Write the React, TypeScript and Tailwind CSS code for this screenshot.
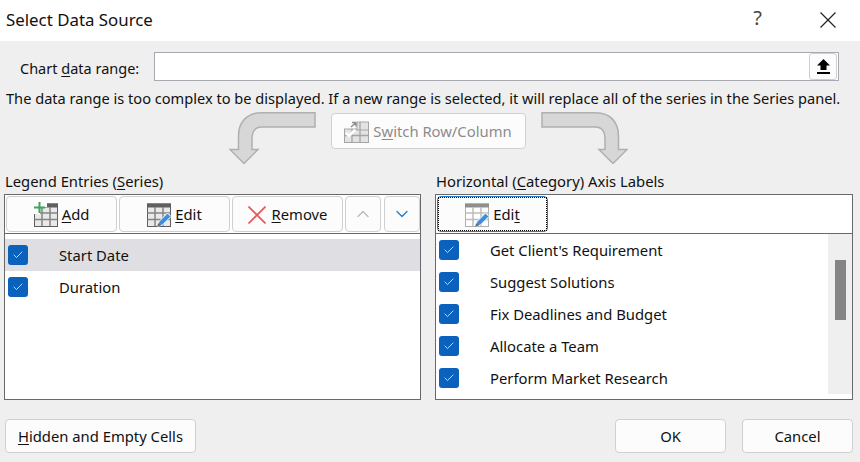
import type { ReactNode } from "react";
import { ChevronUp, ChevronDown, Check } from "lucide-react";

const font = "font-['Noto_Sans','Open_Sans',sans-serif]";

function Key({ children }: { children: ReactNode }) {
  return <span className="underline underline-offset-2 decoration-1">{children}</span>;
}

function Cross({ size, color, width }: { size: number; color: string; width: number }) {
  return (
    <svg width={size} height={size} viewBox={`0 0 ${size} ${size}`} className="shrink-0">
      <path d={`M0.5 0.5L${size - 0.5} ${size - 0.5}M${size - 0.5} 0.5L0.5 ${size - 0.5}`} stroke={color} strokeWidth={width} />
    </svg>
  );
}

function GridIcon({ dim }: { dim?: boolean }) {
  const line = dim ? "#b0b0b0" : "#5f5f5f";
  return (
    <svg width="24" height="24" viewBox="0 0 24 24" className="shrink-0">
      <rect x="0.5" y="1" width="23" height="22.5" fill={dim ? "#fff" : "#e9e9e9"} stroke={line} />
      <rect x="0" y="0.5" width="24" height="4" fill={dim ? "#8f8f8f" : line} />
      <path d="M0.5 10H23.5M0.5 16.5H23.5M8 4V23M16 4V23" stroke={dim ? "#bdbdbd" : "#858585"} strokeWidth="1.5" />
    </svg>
  );
}

function AddIcon() {
  return (
    <span className="relative block h-6 w-[24px] shrink-0">
      <GridIcon />
      <svg width="13" height="12" viewBox="0 0 13 12" className="absolute -top-[1px] left-0">
        <path d="M0 0H13V5H6V12H0Z" fill="#fff" />
        <path d="M5.5 0V11M0 5.5H11" stroke="#3fa35b" strokeWidth="2" />
      </svg>
    </span>
  );
}

function EditIcon({ dim }: { dim?: boolean }) {
  return (
    <span className="relative block h-6 w-[24px] shrink-0">
      <GridIcon dim={dim} />
      <svg width="16" height="17" viewBox="0 0 16 17" className="absolute -right-[1px] -bottom-[1px]">
        <path d="M1.5 15.5L3 10.5L11.5 2L15 5.5L6.5 14Z" fill="#3c8fdc" stroke="#fff" strokeWidth="1" />
        <path d="M1 16L2.2 12L5 14.8Z" fill="#6f6f6f" />
      </svg>
    </span>
  );
}

function Btn({ className, children }: { className: string; children: ReactNode }) {
  return (
    <button className={`flex shrink-0 items-center justify-center rounded-[4px] border border-[#d0d0d0] bg-[#fcfcfc] text-[14.8px] ${className}`}>
      {children}
    </button>
  );
}

function Checkbox() {
  return (
    <span className="flex h-5 w-5 shrink-0 items-center justify-center rounded-[3px] bg-[#0a62bd]">
      <Check className="h-3 w-3 text-white" strokeWidth={1.5} />
    </span>
  );
}

function Arrow({ flip }: { flip?: boolean }) {
  return (
    <svg width="87" height="52" viewBox="0 0 87 52" className={flip ? "-scale-x-100" : ""}>
      <path
        d="M86 0.75H32C18 0.75 9.5 10 9.5 24V37.5H1L15 51.5L29 37.5H23V27C23 19 27 15 33 15H86Z"
        fill="#d7d7d7"
        stroke="#b0b0b0"
        strokeWidth="1.5"
      />
    </svg>
  );
}

function Row({ label, selected }: { label: string; selected?: boolean }) {
  return (
    <div className={`flex h-8 items-center pl-[3px] ${selected ? "bg-[#dfdfe3]" : ""}`}>
      <Checkbox />
      <span className="ml-[31px] pt-px text-[14.8px]">{label}</span>
    </div>
  );
}

function SwitchIcon() {
  return (
    <svg width="25" height="22" viewBox="0 0 25 22" className="shrink-0">
      <rect x="0.5" y="8" width="24" height="13.5" fill="#e3e3e3" stroke="#a5a5a5" />
      <rect x="13" y="1" width="11.5" height="8" fill="#e3e3e3" stroke="#a5a5a5" />
      <path d="M8 8V21.5M16 1V21.5M0.5 14.5H24.5" stroke="#a5a5a5" strokeWidth="1.3" />
      <path d="M2 12L5 15L11 9" fill="none" stroke="#fff" strokeWidth="2.5" />
      <path d="M7 6L12 1.5M12 1.5H8M12 1.5V5.5" fill="none" stroke="#8c8c8c" strokeWidth="1.4" />
    </svg>
  );
}

const categories = [
  "Get Client's Requirement",
  "Suggest Solutions",
  "Fix Deadlines and Budget",
  "Allocate a Team",
  "Perform Market Research",
];

export default function App() {
  return (
    <div className={`flex h-[462px] w-[860px] flex-col overflow-hidden bg-[#efefef] text-[#111] ${font}`}>
      <div className="flex h-[41px] shrink-0 items-center justify-between bg-white pl-[6px] pr-[24px]">
        <span className="pb-[2px] text-[16.85px]">Select Data Source</span>
        <div className="flex items-center gap-[58px] pb-[2px]">
          <span className="pb-[4px] text-[20px] leading-none text-[#444]">?</span>
          <Cross size={16} color="#222" width={1.2} />
        </div>
      </div>

      <div className="mt-[11px] flex h-[29px] items-center pl-[20px]">
        <span className="w-[134px] pt-[4px] text-[14.5px]">
          Chart <Key>d</Key>ata range:
        </span>
        <div className="flex h-[29px] w-[685px] items-center justify-end border border-[#a9a9b2] bg-white pr-px">
          <button className="flex h-[27px] w-[28px] items-center justify-center rounded-[3px] border border-[#d0d0d0] bg-[#fcfcfc]">
            <svg width="13" height="15" viewBox="0 0 13 15">
              <path d="M6.5 0L13 6.5H9.5V11H3.5V6.5H0Z" fill="#000" />
              <rect y="13" width="13" height="2" fill="#000" />
            </svg>
          </button>
        </div>
      </div>

      <p className="mt-[6px] h-[22px] whitespace-nowrap pl-[6px] text-[14.6px] leading-[22px]">
        The data range is too complex to be displayed. If a new range is selected, it will replace all of the series in the Series panel.
      </p>

      <div className="mt-[3px] flex justify-center gap-[15px] pr-[4px]">
        <Arrow />
        <Btn className="mt-[1px] h-[36px] w-[195px] gap-[4px] pt-px text-[#8c8c8c]">
          <SwitchIcon />
          <span>
            S<Key>w</Key>itch Row/Column
          </span>
        </Btn>
        <Arrow flip />
      </div>

      <div className="mt-[5px] flex gap-[14px] pl-[4px]">
        <div className="w-[417px]">
          <div className="h-[25px] pl-[1px] text-[14.8px] leading-[24px]">
            Legend Entries (<Key>S</Key>eries)
          </div>
          <div className="h-[206px] border border-[#696969] bg-white">
            <div className="flex h-[39px] items-center gap-[2px] border-b border-[#696969] pl-px">
              <Btn className="h-[36px] w-[111px] gap-[4px] pt-px">
                <AddIcon />
                <span>
                  <Key>A</Key>dd
                </span>
              </Btn>
              <Btn className="h-[36px] w-[111px] gap-[4px] pt-px">
                <EditIcon />
                <span>
                  <Key>E</Key>dit
                </span>
              </Btn>
              <Btn className="h-[36px] w-[111px] gap-[6px] pt-px">
                <Cross size={18} color="#e8555a" width={1.6} />
                <span>
                  <Key>R</Key>emove
                </span>
              </Btn>
              <Btn className="h-[36px] w-[36px]">
                <ChevronUp className="h-5 w-5 text-[#b9b9b9]" strokeWidth={1.6} />
              </Btn>
              <Btn className="ml-px h-[36px] w-[36px]">
                <ChevronDown className="h-5 w-5 text-[#1f7fd1]" strokeWidth={1.6} />
              </Btn>
            </div>
            <div className="pt-[5px]">
              <Row label="Start Date" selected />
              <Row label="Duration" />
            </div>
          </div>
        </div>

        <div className="w-[418px]">
          <div className="h-[25px] pl-[1px] text-[14.8px] leading-[24px]">
            Horizontal (<Key>C</Key>ategory) Axis Labels
          </div>
          <div className="h-[206px] border border-[#696969] bg-white">
            <div className="flex h-[39px] items-center border-b border-[#696969] pl-px">
              <button className="h-[36px] w-[111px] rounded-[4px] border border-[#1f7fd1] bg-[#fcfcfc] text-[14.8px]">
                <span className="flex h-full w-full items-center justify-center gap-[4px] border border-dotted border-black pt-px">
                  <EditIcon dim />
                  <span>
                    Edi<Key>t</Key>
                  </span>
                </span>
              </button>
            </div>
            <div className="flex h-[160px]">
              <div className="flex-1">
                {categories.map((c) => (
                  <Row key={c} label={c} />
                ))}
              </div>
              <div className="w-[24px] bg-[#efefef] pl-[7px] pt-[26px]">
                <div className="h-[60px] w-[11px] bg-[#858585]" />
              </div>
            </div>
          </div>
        </div>
      </div>

      <div className="mt-[19px] flex pl-[5px] pr-[7px]">
        <Btn className="h-[34px] w-[191px] pt-px">
          <span>
            <Key>H</Key>idden and Empty Cells
          </span>
        </Btn>
        <div className="flex-1" />
        <Btn className="h-[34px] w-[111px] pt-px">OK</Btn>
        <Btn className="ml-[16px] h-[34px] w-[111px] pt-px">Cancel</Btn>
      </div>
    </div>
  );
}
